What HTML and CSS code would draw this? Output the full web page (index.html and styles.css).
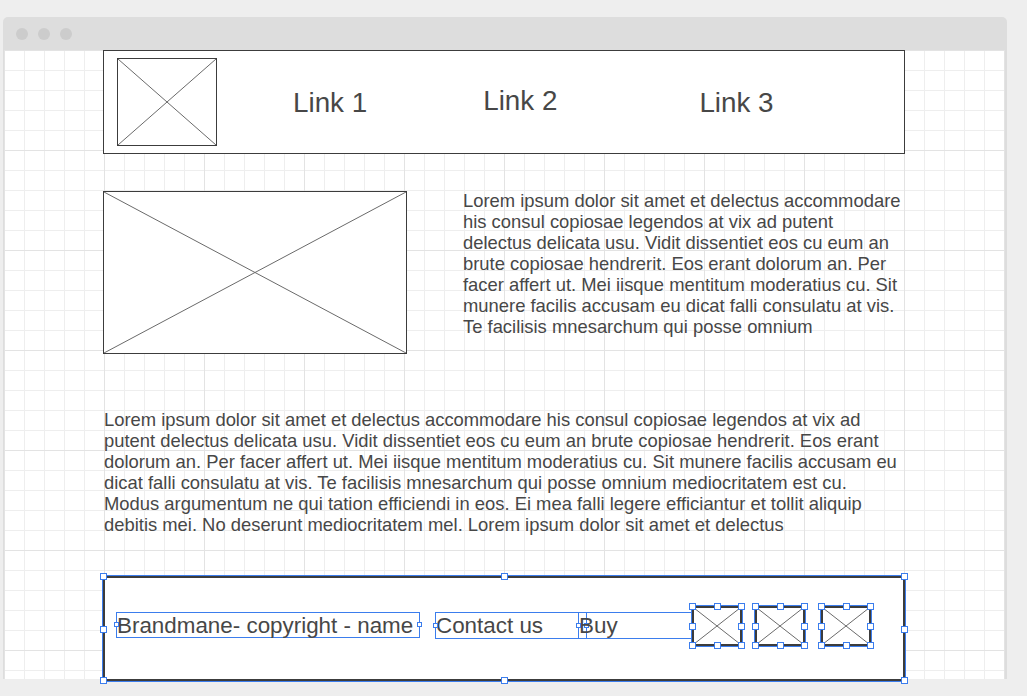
FILE: index.html
```html
<!DOCTYPE html>
<html lang="en">
<head>
<meta charset="utf-8">
<title>Wireframe</title>
<link rel="stylesheet" href="styles.css">
</head>
<body>
<div class="window">
  <div class="titlebar">
    <span class="dot"></span><span class="dot"></span><span class="dot"></span>
  </div>
  <div class="canvas">
    <div class="column">
      <header class="header">
        <div class="ph logo">
          <svg viewBox="0 0 100 100" preserveAspectRatio="none"><line x1="0" y1="0" x2="100" y2="100" vector-effect="non-scaling-stroke"/><line x1="100" y1="0" x2="0" y2="100" vector-effect="non-scaling-stroke"/></svg>
        </div>
        <span class="link link1">Link 1</span>
        <span class="link link2">Link 2</span>
        <span class="link link3">Link 3</span>
      </header>

      <section class="hero">
        <div class="ph hero-img">
          <svg viewBox="0 0 100 100" preserveAspectRatio="none"><line x1="0" y1="0" x2="100" y2="100" vector-effect="non-scaling-stroke"/><line x1="100" y1="0" x2="0" y2="100" vector-effect="non-scaling-stroke"/></svg>
        </div>
        <p class="text hero-text">Lorem ipsum dolor sit amet et delectus accommodare his consul copiosae legendos at vix ad putent delectus delicata usu. Vidit dissentiet eos cu eum an brute copiosae hendrerit. Eos erant dolorum an. Per facer affert ut. Mei iisque mentitum moderatius cu. Sit munere facilis accusam eu dicat falli consulatu at vis. Te facilisis mnesarchum qui posse omnium</p>
      </section>

      <p class="text body-text">Lorem ipsum dolor sit amet et delectus accommodare his consul copiosae legendos at vix ad putent delectus delicata usu. Vidit dissentiet eos cu eum an brute copiosae hendrerit. Eos erant dolorum an. Per facer affert ut. Mei iisque mentitum moderatius cu. Sit munere facilis accusam eu dicat falli consulatu at vis. Te facilisis mnesarchum qui posse omnium mediocritatem est cu. Modus argumentum ne qui tation efficiendi in eos. Ei mea falli legere efficiantur et tollit aliquip debitis mei. No deserunt mediocritatem mel. Lorem ipsum dolor sit amet et delectus</p>

      <footer class="footer">
        <span class="tbox brand">Brandmane- copyright - name<span class="tframe"><i class="th l"></i><i class="th r"></i></span></span>
        <span class="tbox contact">Contact us<span class="tframe"><i class="th l"></i><i class="th r"></i></span></span>
        <span class="tbox buy">Buy<span class="tframe"><i class="th l"></i><i class="th r"></i></span></span>

        <div class="ph icon icon1">
          <svg viewBox="0 0 100 100" preserveAspectRatio="none"><line x1="0" y1="0" x2="100" y2="100" vector-effect="non-scaling-stroke"/><line x1="100" y1="0" x2="0" y2="100" vector-effect="non-scaling-stroke"/></svg>
          <span class="frame"><i class="hd tl"></i><i class="hd tm"></i><i class="hd tr"></i><i class="hd ml"></i><i class="hd mr"></i><i class="hd bl"></i><i class="hd bm"></i><i class="hd br"></i></span>
        </div>
        <div class="ph icon icon2">
          <svg viewBox="0 0 100 100" preserveAspectRatio="none"><line x1="0" y1="0" x2="100" y2="100" vector-effect="non-scaling-stroke"/><line x1="100" y1="0" x2="0" y2="100" vector-effect="non-scaling-stroke"/></svg>
          <span class="frame"><i class="hd tl"></i><i class="hd tm"></i><i class="hd tr"></i><i class="hd ml"></i><i class="hd mr"></i><i class="hd bl"></i><i class="hd bm"></i><i class="hd br"></i></span>
        </div>
        <div class="ph icon icon3">
          <svg viewBox="0 0 100 100" preserveAspectRatio="none"><line x1="0" y1="0" x2="100" y2="100" vector-effect="non-scaling-stroke"/><line x1="100" y1="0" x2="0" y2="100" vector-effect="non-scaling-stroke"/></svg>
          <span class="frame"><i class="hd tl"></i><i class="hd tm"></i><i class="hd tr"></i><i class="hd ml"></i><i class="hd mr"></i><i class="hd bl"></i><i class="hd bm"></i><i class="hd br"></i></span>
        </div>

        <span class="frame footer-frame"><i class="hd tl"></i><i class="hd tm"></i><i class="hd tr"></i><i class="hd ml"></i><i class="hd mr"></i><i class="hd bl"></i><i class="hd bm"></i><i class="hd br"></i></span>
      </footer>
    </div>
  </div>
</div>
</body>
</html>
```

FILE: styles.css
```css
html, body {
  margin: 0;
  padding: 0;
  background: #eeeeee;
}

body {
  font-family: "Liberation Sans", Arial, sans-serif;
  color: #474747;
  min-height: 696px;
}

.window {
  margin: 17px 0 0 3px;
  width: 1004px;
}

.titlebar {
  height: 33px;
  display: flex;
  align-items: center;
  gap: 10px;
  padding-left: 13px;
  box-sizing: border-box;
  background: #dddddd;
  border-radius: 5px 5px 0 0;
}

.dot {
  width: 12px;
  height: 12px;
  border-radius: 50%;
  background: #cccccc;
}

.canvas {
  position: relative;
  height: 629px;
  border-left: 1px solid #dddddd;
  border-right: 2px solid #dddddd;
  background-color: #ffffff;
  background-image:
    linear-gradient(to right, #e3e3e3 1px, transparent 1px),
    linear-gradient(to bottom, #e3e3e3 1px, transparent 1px),
    linear-gradient(to right, #eeeeee 1px, transparent 1px),
    linear-gradient(to bottom, #eeeeee 1px, transparent 1px);
  background-size: 100px 100px, 100px 100px, 20px 20px, 20px 20px;
}

.column {
  margin-left: 99px;
  width: 802px;
}

/* placeholder boxes */
.ph {
  box-sizing: border-box;
  border: 1px solid #3c3c3c;
  background: #ffffff;
  position: relative;
}

.ph svg {
  display: block;
  width: 100%;
  height: 100%;
}

.ph line {
  stroke: #6a6a6a;
  stroke-width: 1;
}

/* header */
.header {
  height: 104px;
  box-sizing: border-box;
  border: 1px solid #3c3c3c;
  background: #ffffff;
  display: flex;
  align-items: flex-start;
}

.logo {
  width: 100px;
  height: 88px;
  margin: 7px 0 0 13px;
  border-width: 1.5px;
}

.link {
  font-size: 27.8px;
  line-height: 31px;
  white-space: nowrap;
}

.link1 { margin: 36px 0 0 76px; }
.link2 { margin: 34px 0 0 116px; }
.link3 { margin: 36px 0 0 142px; }

/* hero */
.hero {
  margin-top: 37px;
  display: flex;
  align-items: flex-start;
}

.hero-img {
  width: 304px;
  height: 163px;
  flex: none;
}

.text {
  margin: 0;
  font-size: 18.4px;
  line-height: 21px;
}

.hero-text {
  margin: -1px 0 0 56px;
  width: 441px;
}

.body-text {
  margin: 55px 0 0 1px;
  width: 801px;
}

/* footer */
.footer {
  position: relative;
  margin-top: 41px;
  height: 105px;
  box-sizing: border-box;
  border: 2px solid #3c3c3c;
  background: #ffffff;
  display: flex;
  align-items: flex-start;
}

.tbox {
  position: relative;
  box-sizing: border-box;
  height: 27px;
  margin-top: 34px;
  border: 1px solid #3b7ded;
  font-size: 22.4px;
  line-height: 25px;
  white-space: nowrap;
  flex: none;
}

.brand { margin-left: 11px; width: 304px; height: 26px; }
.contact { margin-left: 15px; width: 152px; }
.buy { margin-left: -9px; width: 140px; }

.tframe {
  position: absolute;
  inset: -1px;
  pointer-events: none;
}

.th {
  position: absolute;
  width: 5px;
  height: 5px;
  top: calc(50% - 3px);
  box-sizing: border-box;
  border: 1px solid #3b7ded;
  background: #ffffff;
}

.th.l { left: -2px; }
.th.r { right: -2px; }

.icon {
  width: 50px;
  height: 40px;
  margin-top: 28px;
  border-width: 2px;
  flex: none;
  outline: 1px solid #3b7ded;
}

.icon1 { margin-left: -26px; }
.icon2 { margin-left: 13px; }
.icon3 { margin-left: 16px; }

.frame {
  position: absolute;
  inset: -2px;
  pointer-events: none;
}

.footer-frame {
  outline: 1px solid #3b7ded;
}

.hd {
  position: absolute;
  width: 7px;
  height: 7px;
  box-sizing: border-box;
  border: 1px solid #3b7ded;
  background: #ffffff;
}

.hd.tl { left: -3px; top: -3px; }
.hd.tm { left: calc(50% - 3px); top: -3px; }
.hd.tr { right: -3px; top: -3px; }
.hd.ml { left: -3px; top: calc(50% - 3px); }
.hd.mr { right: -3px; top: calc(50% - 3px); }
.hd.bl { left: -3px; bottom: -3px; }
.hd.bm { left: calc(50% - 3px); bottom: -3px; }
.hd.br { right: -3px; bottom: -3px; }
```
